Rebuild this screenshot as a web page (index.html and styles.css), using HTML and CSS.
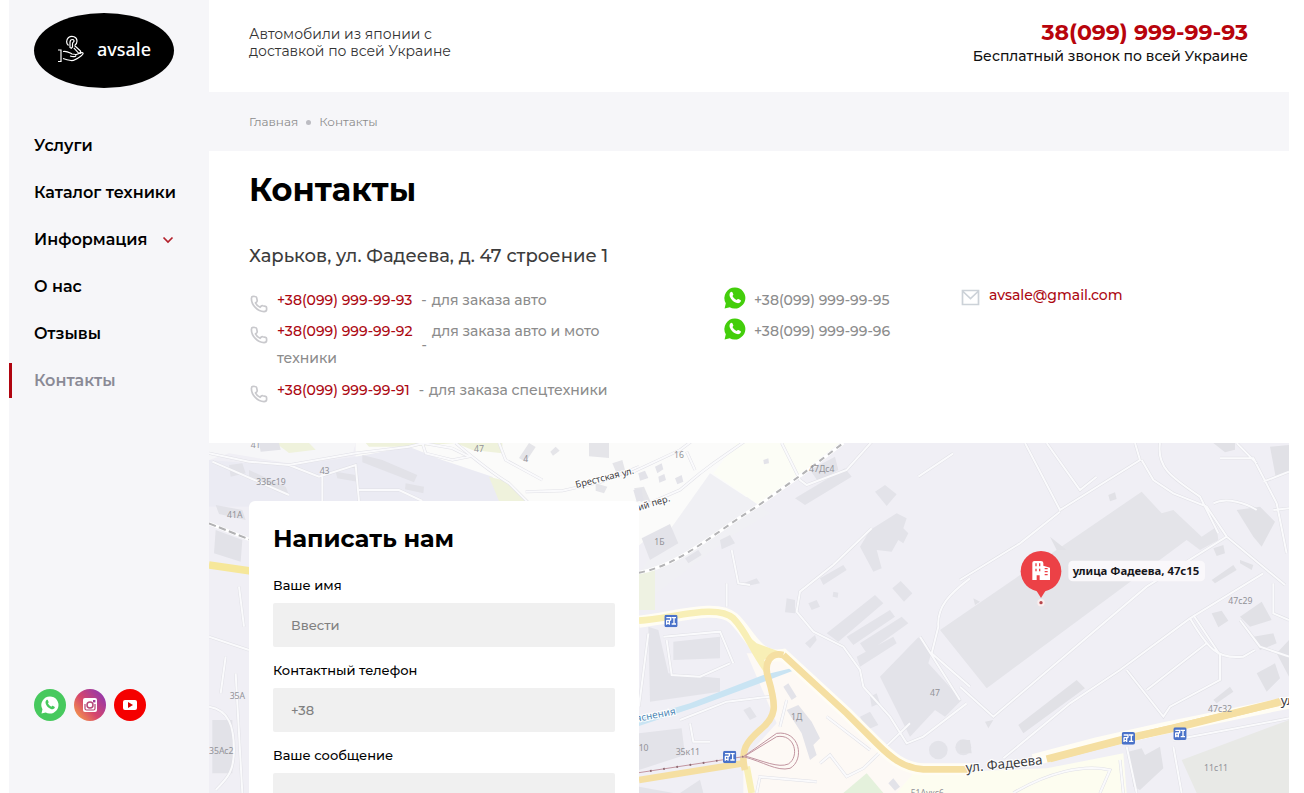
FILE: index.html
```html
<!DOCTYPE html>
<html lang="ru">
<head>
<meta charset="utf-8">
<meta name="viewport" content="width=device-width, initial-scale=1">
<title>Контакты — avsale</title>
<link rel="stylesheet" href="styles.css">
</head>
<body>
<svg class="sprite" aria-hidden="true">
  <symbol id="phone" viewBox="0 0 18 18"><path d="M5.200 1.500 3 1.300C2 1.400 1.400 2.200 1.400 3.400c0 6.600 6.200 13.100 12.600 13.200 1.600 0 2.600-.8 2.600-2v-1.800c0-.7-.4-1.200-1.100-1.400l-2.700-.7c-.7-.2-1.200 0-1.700.5l-1 1.100C8 11.500 6.400 9.900 5.500 7.900l1.200-1.100c.4-.4.6-.9.500-1.500L6.600 2.600c-.2-.7-.7-1.100-1.400-1.100Z" fill="none" stroke="currentColor" stroke-width="1.700"/></symbol>
  <symbol id="wa" viewBox="0 0 22 22"><path d="M11 .5a10.500 10.500 0 0 0-9.200 15.700L.6 21.400l5.200-1.200A10.500 10.500 0 1 0 11 .5Z" fill="currentColor"/><path d="M6.500 5.300c.7-.8 1.500-.8 1.900 0l.9 2c.2.500-.3 1.100-.8 1.700.8 1.700 2.200 3.100 4.200 4 .7-.9 1.100-1.300 1.700-1l2 1c.7.3.6 1.100.2 1.800-.8 1.500-2.600 1.700-4.500 1-3.200-1.200-5.200-3.400-6.200-6-.7-1.800-.4-3.600.6-4.500Z" class="wa-handset"/></symbol>
  <symbol id="mail" viewBox="0 0 19 17"><path d="M1.500 1.500h16v14h-16zM2 2.500l7.500 7 7.500-7" fill="none" stroke="currentColor" stroke-width="1.700"/></symbol>
  <symbol id="stop" viewBox="0 0 40 38"><rect width="40" height="38" rx="6" fill="#4a72c9"/><path d="M6 9h13v8M6 17h13M7 17v13M15 17v13M22 9h13M29 9v19M22 28h13M7 26h8" fill="none" stroke="#fff" stroke-width="4"/></symbol>
</svg>
<div class="page">
  <aside class="sidebar">
    <a class="logo" href="#">
      <svg class="logo-mark" viewBox="0 0 28 28" aria-hidden="true" fill="none" stroke="#fff" stroke-width="1.200"><path d="M1 15h3v11.500H1M6 16.500c4-1 6 1 9 2.500 2 0 4 0 4 1.500S16 22 13 21M18 20l7-2.500c2 .5 1 2-1 3.500-4 3-7 5-10 4.500-3-.5-5-1-8-2"/><path d="M11.500 10.500c-2.500-2-2.500-5.500 0-8 3.500-2.500 8.500-.5 8.500 3.500 0 2-.8 3.500-2.200 4.300M13 12.500V7.500c0-2 1-3 2.500-3s2 1.500 1 2.500c-1 .5-1 1-1 2v3l-1.200 1.200zM17.500 10.500l6 5.500v2.200l-2.200-.4-4.500-5"/></svg>
      <span>avsale</span>
    </a>
    <nav class="menu">
      <a href="#">Услуги</a>
      <a href="#">Каталог техники</a>
      <a href="#">Информация <svg class="chevron" viewBox="0 0 12 8" aria-hidden="true"><path d="m1.500 1.500 4.500 4.500 4.500-4.500" fill="none" stroke="currentColor" stroke-width="1.700"/></svg></a>
      <a href="#">О нас</a>
      <a href="#">Отзывы</a>
      <a class="current" href="#" aria-current="page">Контакты</a>
    </nav>
    <div class="social">
      <a class="social-wa" href="#" aria-label="WhatsApp"><svg viewBox="0 0 22 22" width="18" height="18"><use href="#wa"/></svg></a>
      <a class="social-ig" href="#" aria-label="Instagram"><svg viewBox="0 0 16 16" width="16" height="16"><rect x="1" y="1" width="14" height="14" rx="2" fill="#fff"/><path d="M3 7v4.500A1.500 1.500 0 0 0 4.500 13h7a1.500 1.500 0 0 0 1.500-1.500V7" fill="none" stroke="#b54777" stroke-width="1.200"/><circle cx="8" cy="8" r="3" fill="#fff" stroke="#b54777" stroke-width="1.500"/><rect x="11" y="3" width="2.400" height="2.400" fill="#a23a95"/></svg></a>
      <a class="social-yt" href="#" aria-label="YouTube"><svg viewBox="0 0 16 12" width="16" height="12"><rect x="1" y="1" width="14" height="10" rx="2" fill="#fff"/><path d="M6 3v6l5-3z" fill="#d80000"/></svg></a>
    </div>
  </aside>

  <main class="main">
    <header class="header">
      <p class="slogan">Автомобили из японии с доставкой по всей Украине</p>
      <div class="call">
        <a class="call-number" href="tel:380999999993">38(099) 999-99-93</a>
        <p class="call-note">Бесплатный звонок по всей Украине</p>
      </div>
    </header>
    <nav class="crumbs" aria-label="Навигация">
      <a href="#">Главная</a><span class="crumb-dot"></span><span>Контакты</span>
    </nav>
    <section class="info">
      <h1>Контакты</h1>
      <p class="address">Харьков, ул. Фадеева, д. 47 строение 1</p>
      <div class="contacts">
        <ul class="list phones">
          <li><svg class="ico-phone"><use href="#phone"/></svg><span><a href="#">+38(099) 999-99-93</a><span class="dash">-</span>для заказа авто</span></li>
          <li><svg class="ico-phone"><use href="#phone"/></svg><span><a href="#">+38(099) 999-99-92</a><span class="dash dash-low">-</span>для заказа авто и мото техники</span></li>
          <li><svg class="ico-phone"><use href="#phone"/></svg><span><a href="#">+38(099) 999-99-91</a><span class="dash">-</span>для заказа спецтехники</span></li>
        </ul>
        <ul class="list">
          <li><svg class="ico-wa"><use href="#wa"/></svg><span>+38(099) 999-99-95</span></li>
          <li><svg class="ico-wa"><use href="#wa"/></svg><span>+38(099) 999-99-96</span></li>
        </ul>
        <ul class="list mails">
          <li><svg class="ico-mail"><use href="#mail"/></svg><a href="#">avsale@gmail.com</a></li>
        </ul>
      </div>
    </section>

    <section class="map-area">
      <svg class="map" viewBox="0 9 3240 1050" preserveAspectRatio="xMinYMin slice" role="img" aria-label="Карта">
        <defs>
          <path id="lanes-west" d="M0 40 120 65 240 75 440 40 600 20 680 0M740 9C800 60 850 100 900 130L960 190M950 155 1060 152 1180 125 1290 80M870 9 890 60 1000 120M10 65 240 165M240 75 330 110 440 75 450 183M450 150 570 150 640 183M340 90V183M640 9 730 25 780 50 730 60 650 40ZM0 590 120 630M0 800C60 810 75 860 75 930 75 990 60 1010 20 1050M90 440 105 560M50 650 35 760M80 700 100 1059"/>
          <path id="lanes-mid" d="M0 100 150 30 190 0M170 35 195 90M0 215 150 150 210 100 250 70 350 0M455 9 510 120 530 135 650 90 730 0M865 110 970 40M305 330 325 430 360 435M290 430V500M725 265 610 375 510 455 500 515 550 575 640 620 690 690 700 740 780 830 830 910 880 890 1010 790M870 590 990 780M1020 415C960 460 920 500 925 560L905 640 1020 740M150 840 290 785 420 770M180 850 190 905 240 905M55 580 27 800M100 590 270 575 310 670M110 600 125 705 210 710 300 670M590 830 720 930M450 860 470 780M570 970 600 945 650 1010 700 985 840 850M385 1010 560 1025M380 1059 390 1010"/>
          <path id="lanes-east" d="M195 9 300 210 540 60 525 9M260 9 360 150 410 110M0 420 180 310 300 215M545 60 580 120 640 160 740 200 800 290 975 435M600 9C590 80 630 110 720 170L775 280M780 55 880 55 950 190 980 340M830 9 890 70M760 190C800 170 860 190 890 210M910 125 987 95M940 210 987 205M800 290 560 440 100 830 0 740M910 400 690 535 480 690 330 790 130 955M690 535C740 620 770 660 850 650L885 630M700 525 780 645V720L630 800 610 830 500 690M560 750 740 610M840 540 900 620 987 650M940 430V520L987 540M500 920 530 1059M640 920 665 1059M160 1059C260 1000 370 970 450 990L420 1059M480 960 490 1059M640 900 987 835"/>
          <path id="rail" d="M27 398C150 375 250 280 380 200L520 100 640 9"/>
        </defs>
        <rect y="9" width="3240" height="1050" fill="#f0eff5"/>
        <!-- north-west quarter -->
        <g>
          <path d="M440 9H1890L1650 150 1460 260 1320 290 1263 340V200H900L840 110 730 85 560 40 440 50Z" fill="#fbfbfa"/>
          <path d="M0 60 120 70 250 75 440 50 600 20 700 60 850 110 900 200H0Z" fill="#ebebf3"/>
          <path d="M0 9H440L430 45 240 70 60 40 0 60Z" fill="#f6f6f8"/>
          <path d="M200 9H300l20 20-80 10ZM470 9H880V40L790 30 740 9 600 20 480 20ZM840 110 900 125 950 183H870Z" fill="#eff2dc"/>
          <path d="M60 75l40-5 10 30-45 10ZM120 90l110 50 10 25-120-55ZM380 95l60 10 5 20-60-10ZM460 45l60 15 105 45-10 22-155-60ZM590 130l55 10-2 20-55-12ZM150 9h60l5 20-60 6ZM20 195l80 15 10 30-80-18ZM20 270l80 30-5 65-80-25ZM10 840h60v160H10Z" fill="#e2e2e8"/>
          <path d="M960 9l20 12-30 45-20-12ZM1040 20l12 12-20 15-8-12ZM1140 9h60v45l-60-5ZM1210 70l30-10 8 30-25 10ZM1275 145l30-5 20 45h-30ZM1160 130l35 10-10 20-25-8Z" fill="#e5e5e9"/>
          <use href="#lanes-west" class="lane-edge"/><use href="#lanes-west" class="lane"/>
          <path d="M0 250 125 300" fill="none" stroke="#fff" stroke-width="10"/><path d="M0 250 125 300" fill="none" stroke="#b2b2b4" stroke-width="6" stroke-dasharray="22 10"/>
          <path d="M0 375 125 393" stroke="#f6e79a" stroke-width="22"/>
        </g>
        <!-- central quarter -->
        <g transform="translate(1263 0)">
          <path d="M27 400 240 100 385 195 420 220 300 290 27 500Z" fill="#f0f0f4"/>
          <path d="M250 100 320 9H630L500 110 385 195Z" fill="#fcfdf6"/>
          <path d="M27 400 75 390V510H27Z" fill="#eef2e2"/>
          <path d="M350 640 460 640 800 960 860 1000H1130L1290 1059H340V960L440 850Z" fill="#fdf9f5"/>
          <path d="M640 1059 710 1000 760 1059Z" fill="#e4f1dc"/>
          <path d="M850 1000 1250 985 1480 940 1490 1059H800Z" fill="#fdfdf0"/>
          <g fill="#e3e3e9">
            <path d="M35 295 120 252 145 310 60 360ZM270 300l30-15 15 25-40 18ZM165 355l40-25 10 15-40 25ZM495 175 645 85 665 110 525 195ZM540 90l75-40 10 40-60 35ZM735 155l30-20 35 28-30 35ZM690 320 720 270 800 220 830 235 820 265 835 280 820 310 805 300 785 335 740 330 755 385 730 395Z"/>
            <path d="M570 415 640 375 650 390 580 435ZM470 475l25 5v40l-30-3ZM340 430l40-15 10 15-40 8ZM787 445l25-22 35 37-25 25ZM590 580 735 465 760 490 625 605ZM650 590 780 510 795 530 670 615ZM690 610 815 530 835 550 710 640ZM680 650 790 590 800 610 690 680ZM535 490l25-10 10 20-25 10ZM610 455l15 3-2 15-15-3ZM525 610l30-25 5 15-20 25Z"/>
            <path d="M750 710 865 592 905 635 895 670 995 780 945 830 915 810 840 890ZM690 830l30-15 25 40-35 15ZM720 770l20-10 10 30-25 10Z"/>
            <path d="M55 560 85 570 115 700 270 715V755L60 785ZM130 605 270 590V655L130 660ZM27 880 155 865 165 945 27 990ZM460 740l15-10 25 40-15 10ZM470 810l35-15 40 50 25 50-20 20 10 30-20 15-25-80ZM340 810l20-10 20 30-20 10ZM775 1030l15-15 20 25-15 12Z"/>
            <path d="M10 150l25-5 5 35-20 5ZM25 100l20-8 10 22-25 8ZM75 80l20-10 5 18-18 12ZM85 110l18-8 5 18-20 8ZM135 115l20-10 5 20-18 8ZM400 60l15-5 2 15-15 3ZM27 1040 130 1059H27ZM150 1059l60-40 10 40Z"/>
            <circle cx="925" cy="930" r="28"/><circle cx="1000" cy="922" r="24"/>
          </g>
          <use href="#lanes-mid" class="lane-edge"/><use href="#lanes-mid" class="lane"/>
          <use href="#rail" fill="none" stroke="#fff" stroke-width="10"/>
          <use href="#rail" fill="none" stroke="#b4b4b6" stroke-width="6" stroke-dasharray="18 14"/>
          <path d="M27 835 180 790 400 705 490 683 495 690 390 730 200 800 27 858Z" fill="#c9e4f3"/>
          <path d="M27 545C130 535 260 490 310 535 360 580 380 660 460 645L650 820 740 910C780 950 820 985 880 988H1030M1210 960 1400 910 1600 865 1990 785" fill="none" stroke="#fffdf4" stroke-width="36"/>
          <g fill="none" stroke="#f5dfa2" stroke-width="20">
            <path d="M27 542C130 535 260 490 310 535 350 575 360 620 410 690M350 980 365 1059" stroke="#f8efb6"/>
            <path d="M345 580 380 610 450 635 425 650 390 665Z" fill="#f8efb6" stroke="none"/>
            <path d="M340 970 27 1020M460 645C420 635 400 670 415 715 440 800 440 830 390 870 350 905 330 930 345 990"/>
            <path d="M460 645 650 820 740 910C780 950 820 985 880 988H1030M1260 957 1400 920 1600 870 1960 785"/>
          </g>
          <path d="M27 998 340 950 440 880C510 870 525 960 480 985 440 995 400 965 340 950M345 948 440 890C495 880 510 950 475 972 445 985 400 963 345 948" fill="none" stroke="#c295a0" stroke-width="3"/>
          <path d="M60 993 340 950" stroke="#8d6971" stroke-width="6" stroke-dasharray="5 35"/>
        </g>
        <!-- eastern quarter -->
        <g transform="translate(2253 0)">
          <path d="M-60 570 545 155 605 220 640 210 725 290 770 260 775 300 720 330 680 300 80 745Z" fill="#e4e4e9"/>
          <g fill="#e1e1e6"><path d="M830 210 900 200 945 245 905 320 880 290ZM930 20 987 15V95l-40 15ZM760 9h65v20l-30 8ZM175 855 350 720 375 745 190 880ZM755 420 820 375 830 390 765 430ZM760 325l30-10 5 25-25 8ZM840 530 905 485 935 540 870 560ZM890 700 945 670 960 715 920 755ZM755 520l30-8 20 30-30 20ZM760 780 810 740 820 755 770 790ZM445 165l20-8 5 20-20 7ZM270 290 320 330 290 330ZM40 475l20 10-15 10ZM0 900h30l5 40H0ZM75 845l25-5-15 25ZM505 935 545 925 555 945 600 920 610 985 540 1050 520 1040ZM840 360l40 15-5 15-35-20ZM950 640l37-40v110ZM880 590l60-10 10 30-50 20Z"/></g>
          <path d="M665 960 987 840V1059H710Z" fill="#e8e9e6"/>
          <use href="#lanes-east" class="lane-edge"/><use href="#lanes-east" class="lane"/>
          <path d="M260 957 500 895 640 865 960 785" fill="none" stroke="#f5dfa2" stroke-width="22"/>
          <rect x="325" y="362" width="410" height="62" rx="14" fill="#faf8fb"/>
          <path d="M228 450h30l-15 24Z" fill="#ec4146"/>
          <circle cx="243" cy="394" r="61" fill="#ec4146"/>
          <path d="M217 368q0-5 6-5h20q7 0 7 6v8l20 6v37h-31v-14h-9v14h-13Z" fill="#fff"/>
          <path d="M228 370v9m11-9v9m-11 7v8m11-8v8M254 386h9m-9 9h9m-9 9h9" stroke="#ec4146" stroke-width="4"/>
          <circle cx="243" cy="488" r="11" fill="#fbeeee"/><circle cx="243" cy="488" r="5" fill="#b6464b"/>
        </g>
        <g><use href="#stop" x="1366" y="524" width="40" height="38"/><use href="#stop" x="1542" y="932" width="40" height="38"/><use href="#stop" x="2738" y="876" width="40" height="38"/><use href="#stop" x="2893" y="862" width="40" height="38"/></g>
        <g class="house">
          <text x="125" y="25">41</text><text x="332" y="102">43</text><text x="142" y="134">33Бс19</text><text x="54" y="235">41А</text><text x="62" y="777">35А</text><text x="0" y="941">35Ас2</text><text x="943" y="66">4</text><text x="795" y="35">47</text>
          <text x="1395" y="53">16</text><text x="1336" y="316">1Б</text><text x="1800" y="96">47Дс4</text><text x="2163" y="768">47</text><text x="1746" y="840">1Д</text><text x="1289" y="932">10</text><text x="1400" y="945">35к11</text><text x="2105" y="1068">51Аукс6</text>
          <text x="3058" y="491">47с29</text><text x="2997" y="815">47с32</text><text x="2985" y="994">11с11</text>
        </g>
        <g class="street">
          <text transform="translate(1102 144) rotate(-14)">Брестская ул.</text>
          <text transform="translate(1290 212) rotate(-17)">ий пер.</text>
          <text class="street-big" transform="translate(2272 997) rotate(-6)">ул. Фадеева</text>
          <text class="street-big" x="3215" y="795">ул.</text>
          <text class="river" transform="translate(1282 846) rotate(-11)">яснения</text>
        </g>
        <text class="place" x="2591" y="404">улица Фадеева, 47с15</text>
      </svg>
      <form class="card">
        <h2>Написать нам</h2>
        <label for="name">Ваше имя</label>
        <input id="name" type="text" placeholder="Ввести">
        <label for="tel">Контактный телефон</label>
        <input id="tel" type="tel" placeholder="+38">
        <label for="msg">Ваше сообщение</label>
        <textarea id="msg" rows="4"></textarea>
      </form>
    </section>
  </main>
</div>
</body>
</html>
```
FILE: styles.css
```css
* { box-sizing: border-box; }
body {
  margin: 0;
  padding: 0 15px 0 9px;
  background: #fff;
  color: #000;
  font: 14px/18px Montserrat, Inter, "Open Sans", sans-serif;
}
h1, h2, p, ul { margin: 0; padding: 0; }
a { color: inherit; text-decoration: none; }
.sprite { position: absolute; width: 0; height: 0; }
.page { display: flex; height: 100vh; overflow: hidden; }

.sidebar {
  flex: 0 0 200px;
  display: flex;
  flex-direction: column;
  padding: 13px 0 72px;
  background: #f6f6f9;
}
.logo {
  display: flex;
  align-items: center;
  gap: 12px;
  width: 140px;
  height: 75px;
  margin-left: 25px;
  padding: 0 0 4px 23px;
  border-radius: 50%;
  background: #000;
  color: #fff;
  font: 500 18px/24px "Noto Sans", sans-serif;
}
.logo-mark { width: 28px; height: 28px; }
.menu { display: flex; flex-direction: column; gap: 12px; margin-top: 40px; }
.menu a {
  padding-left: 22px;
  border-left: 3px solid transparent;
  font-size: 16px;
  line-height: 35px;
  font-weight: 600;
}
.menu .current { border-color: #b00410; color: #8a8a96; }
.chevron { width: 12px; height: 8px; margin-left: 10px; vertical-align: 1px; color: #b3202b; }
.social { display: flex; gap: 8px; margin: auto 0 0 25px; }
.social a {
  display: flex;
  align-items: center;
  justify-content: center;
  width: 32px;
  height: 32px;
  border-radius: 50%;
  color: #fff;
}
.social-wa { background: #47c95e; fill: #47c95e; }
.social-ig { background: linear-gradient(50deg, #f7a048 5%, #d6456c 45%, #8a35b5 95%); }
.social-yt { background: #f50000; }

.main { flex: 1; min-width: 0; display: flex; flex-direction: column; }
.header {
  display: flex;
  justify-content: space-between;
  height: 92px;
  padding: 21px 41px 0 40px;
}
.slogan { width: 220px; padding-top: 5px; line-height: 17px; color: #333; }
.call { text-align: right; }
.call-number { display: block; color: #b8040c; font-size: 22px; line-height: 24px; font-weight: 700; }
.call-note { line-height: 22px; font-weight: 500; color: #111; }
.crumbs {
  display: flex;
  align-items: center;
  gap: 8px;
  height: 59px;
  padding: 1px 40px 0;
  background: #f6f6f9;
  color: #8c8c8c;
  font-size: 12px;
}
.crumb-dot { width: 5px; height: 5px; border-radius: 50%; background: #bcbcc2; }

.info { padding: 18px 40px 39px; }
h1 { font-size: 32px; line-height: 42px; font-weight: 700; }
.address { margin-top: 32px; font-size: 18px; line-height: 26px; font-weight: 500; color: #3c3c3c; }
.contacts {
  display: grid;
  grid-template-columns: 475fr 237fr 288fr;
  margin-top: 18px;
  font-weight: 500;
  color: #8c8c8c;
}
.list { display: flex; flex-direction: column; gap: 4px; list-style: none; line-height: 27px; }
.list li { display: flex; gap: 8px; }
.list li + li + li { padding-top: 1px; }
.list svg { flex: none; }
.list a { color: #ac0812; }
.phones { padding-right: 90px; }
.ico-phone { width: 18px; height: 18px; margin: 8px 0 0 1px; color: #c9c9cd; }
.ico-wa { width: 22px; height: 22px; color: #43ce0b; fill: #fff; }
.ico-mail { width: 19px; height: 17px; margin-top: 2px; color: #ccd2d8; }
.mails { line-height: 16px; }
.mails li { gap: 9px; }
.phones li { gap: 9px; }
.dash { padding: 0 5px 0 9px; }
.dash-low { line-height: 0; vertical-align: -14px; }

.map-area { position: relative; flex: 1; min-height: 0; overflow: hidden; padding: 58px 40px 0; }
.map { position: absolute; inset: 0; width: 100%; height: 100%; }
.lane-edge { fill: none; stroke: #e0e0e6; stroke-width: 9px; }
.lane { fill: none; stroke: #fafafc; stroke-width: 6px; }
.house { font: 26px "Noto Sans", sans-serif; fill: #929298; }
.street { font: 28px "Noto Sans", sans-serif; fill: #3c3c3e; stroke: #fff; stroke-width: 6px; paint-order: stroke; }
.street-big { font-size: 40px; }
.river { font-size: 30px; fill: #4b86b5; }
.place { font: bold 34px "Noto Sans", sans-serif; fill: #17171b; }

.card {
  position: relative;
  display: flex;
  flex-direction: column;
  width: 390px;
  max-width: 100%;
  padding: 22px 24px 24px;
  border-radius: 6px;
  background: #fff;
  font-size: 13px;
  font-weight: 500;
}
.card h2 { margin-bottom: 21px; font-size: 24px; line-height: 32px; font-weight: 700; }
.card label { margin-bottom: 9px; }
.card input, .card textarea {
  width: 100%;
  height: 44px;
  margin: 0 0 14px;
  padding: 0 18px;
  border: 0;
  border-radius: 2px;
  background: #f0f0f0;
  font: inherit;
}
.card textarea { height: 110px; padding: 14px 18px; resize: none; }
.card ::placeholder { color: #808080; opacity: 1; }
```
